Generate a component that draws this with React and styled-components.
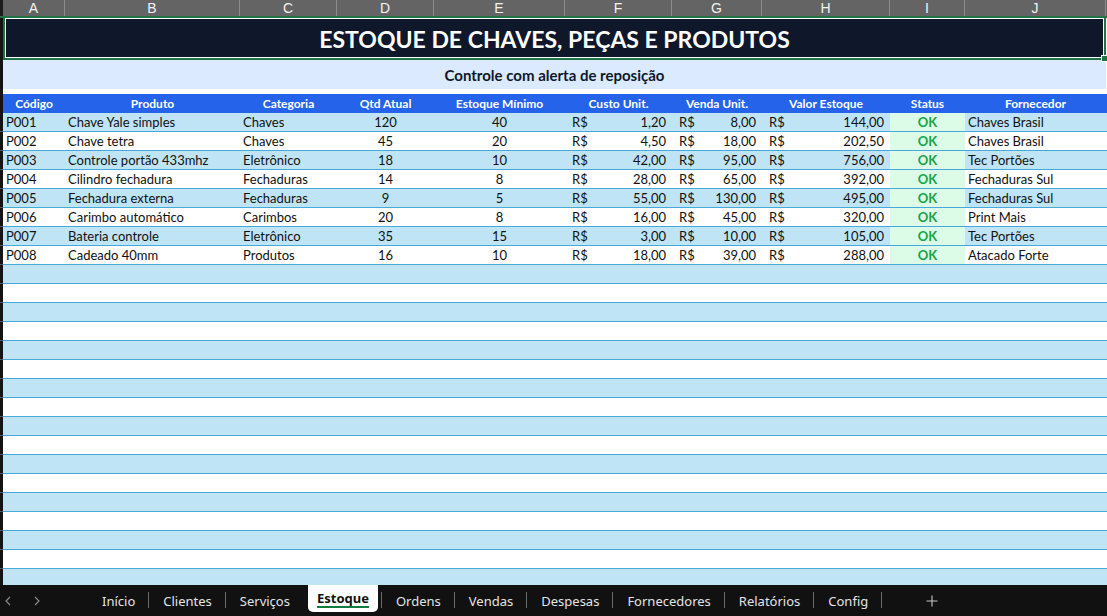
import React from "react";
import styled, { createGlobalStyle } from "styled-components";

const GlobalStyle = createGlobalStyle`
  html, body {
    margin: 0;
    padding: 0;
    background: #ffffff;
    overflow: hidden;
  }
`;

const COLS = "3px 62px 175px 97px 97px 131px 107px 90px 128px 75px 141px 1fr";
const CELL_FONT = `Lato, "Liberation Sans", sans-serif`;

const letters = ["A", "B", "C", "D", "E", "F", "G", "H", "I", "J"];

const headers = [
  "Código",
  "Produto",
  "Categoria",
  "Qtd Atual",
  "Estoque Mínimo",
  "Custo Unit.",
  "Venda Unit.",
  "Valor Estoque",
  "Status",
  "Fornecedor",
];

const items = [
  ["P001", "Chave Yale simples", "Chaves", 120, 40, "1,20", "8,00", "144,00", "Chaves Brasil"],
  ["P002", "Chave tetra", "Chaves", 45, 20, "4,50", "18,00", "202,50", "Chaves Brasil"],
  ["P003", "Controle portão 433mhz", "Eletrônico", 18, 10, "42,00", "95,00", "756,00", "Tec Portões"],
  ["P004", "Cilindro fechadura", "Fechaduras", 14, 8, "28,00", "65,00", "392,00", "Fechaduras Sul"],
  ["P005", "Fechadura externa", "Fechaduras", 9, 5, "55,00", "130,00", "495,00", "Fechaduras Sul"],
  ["P006", "Carimbo automático", "Carimbos", 20, 8, "16,00", "45,00", "320,00", "Print Mais"],
  ["P007", "Bateria controle", "Eletrônico", 35, 15, "3,00", "10,00", "105,00", "Tec Portões"],
  ["P008", "Cadeado 40mm", "Produtos", 16, 10, "18,00", "39,00", "288,00", "Atacado Forte"],
];

const tabs = [
  "Início",
  "Clientes",
  "Serviços",
  "Estoque",
  "Ordens",
  "Vendas",
  "Despesas",
  "Fornecedores",
  "Relatórios",
  "Config",
];

const Sheet = styled.div`
  width: 1107px;
  height: 616px;
  display: flex;
  flex-direction: column;
  background: #ffffff;
  overflow: hidden;
`;

const Grid = styled.div`
  flex: 1;
  display: flex;
  flex-direction: column;
  overflow: hidden;
`;

const ColumnBar = styled.div`
  display: grid;
  grid-template-columns: ${COLS};
  height: 16px;
  background: #646464;
  border-bottom: 2px solid #217346;
  flex-shrink: 0;
`;

const ColumnLetter = styled.div`
  display: flex;
  align-items: center;
  justify-content: center;
  color: #f2f2f2;
  font-family: "Liberation Sans", Arial, sans-serif;
  font-size: 14px;
  border-right: 1px solid #8c8c8c;
  &:first-child {
    background: #1c1c1c;
    border-right: none;
  }
`;

const Row = styled.div`
  display: grid;
  grid-template-columns: ${COLS};
  height: ${(p) => p.$h}px;
  flex-shrink: 0;
  background: ${(p) => p.$bg || "#ffffff"};
  border-bottom: ${(p) => (p.$line ? `1px solid ${p.$line}` : "none")};
  box-sizing: border-box;
`;

const Gutter = styled.div`
  background: #141414;
  border-bottom: 1px solid #5a5a5a;
  margin-bottom: -1px;
`;

const TitleCell = styled.div`
  grid-column: 2 / 12;
  box-sizing: border-box;
  border: 2px solid #217346;
  border-top: none;
  padding: 1px;
  background: #ffffff;
  position: relative;
`;

const TitleInner = styled.div`
  height: 100%;
  background: #0f172a;
  display: flex;
  align-items: center;
  justify-content: center;
  color: #ffffff;
  font-family: ${CELL_FONT};
  font-weight: 700;
  font-size: 23px;
  padding-top: 1px;
  box-sizing: border-box;
`;

const FillHandle = styled.span`
  position: absolute;
  right: -4px;
  bottom: -4px;
  width: 5px;
  height: 5px;
  background: #217346;
  border: 1px solid #ffffff;
`;

const SubtitleCell = styled.div`
  grid-column: 2 / 12;
  background: #dbeafe;
  display: flex;
  align-items: center;
  justify-content: center;
  color: #0f172a;
  font-family: ${CELL_FONT};
  font-weight: 700;
  font-size: 15px;
`;

const Spacer = styled.div`
  grid-column: 2 / 13;
  background: #ffffff;
`;

const HeadCell = styled.div`
  display: flex;
  align-items: center;
  justify-content: center;
  color: #ffffff;
  font-family: ${CELL_FONT};
  font-weight: 700;
  font-size: 12px;
  white-space: nowrap;
`;

const Cell = styled.div`
  display: flex;
  align-items: center;
  justify-content: ${(p) => p.$align || "flex-start"};
  padding: 0 3px;
  color: #111111;
  font-family: ${CELL_FONT};
  font-size: 13px;
  white-space: nowrap;
  overflow: hidden;
`;

const MoneyCell = styled.div`
  display: flex;
  align-items: center;
  justify-content: space-between;
  padding: 0 6px 0 7px;
  color: #111111;
  font-family: ${CELL_FONT};
  font-size: 13px;
  white-space: nowrap;
`;

const StatusCell = styled.div`
  display: flex;
  align-items: center;
  justify-content: center;
  background: ${(p) => (p.$filled ? "#dcfce7" : "transparent")};
  color: #16a34a;
  font-family: ${CELL_FONT};
  font-weight: 700;
  font-size: 13px;
`;

const TabBar = styled.div`
  height: 31px;
  flex-shrink: 0;
  background: #111111;
  display: flex;
  align-items: stretch;
  font-family: "Noto Sans", "Open Sans", sans-serif;
  font-size: 13px;
  color: #e4e4e4;
`;

const NavArrows = styled.div`
  width: 88px;
  display: flex;
  align-items: center;
  gap: 21px;
  padding-left: 4px;
  box-sizing: border-box;
  color: #8a8a8a;
`;

const Tab = styled.div`
  display: flex;
  align-items: center;
  padding: 0 13px 0 14px;
  white-space: nowrap;
  position: relative;
  ${(p) =>
    p.$active &&
    `
    background: #ffffff;
    color: #111111;
    font-weight: 700;
    padding: 4px 9px 0;
    margin: 0 3px 4px 4px;
    border-radius: 0 0 5px 5px;
    align-items: flex-start;
  `}
`;

const TabUnderline = styled.span`
  position: absolute;
  left: 9px;
  right: 9px;
  bottom: 4px;
  height: 2px;
  background: #107c41;
`;

const Separator = styled.div`
  width: 1px;
  background: ${(p) => (p.$hidden ? "transparent" : "#6b6b6b")};
  margin: 7px 0 8px;
`;

const AddTab = styled.div`
  display: flex;
  align-items: center;
  padding-left: 44px;
  color: #c8c8c8;
`;

const Chevron = ({ dir }) => (
  <svg width="8" height="10" viewBox="0 0 8 10" fill="none">
    <path
      d={dir === "left" ? "M6 1 L2 5 L6 9" : "M2 1 L6 5 L2 9"}
      stroke="currentColor"
      strokeWidth="1.2"
    />
  </svg>
);

const Plus = () => (
  <svg width="12" height="12" viewBox="0 0 12 12">
    <path d="M6 0.5 V11.5 M0.5 6 H11.5" stroke="currentColor" strokeWidth="1.1" />
  </svg>
);

const ROW_LINE = "#45a9dc";
const BLUE_ROW = "#bfe4f5";

const DataRow = ({ item, index }) => {
  const [code, name, cat, qty, min, cost, sale, value, supplier] = item;
  const bg = index % 2 === 0 ? BLUE_ROW : "#ffffff";
  return (
    <Row $h={19} $bg={bg} $line={ROW_LINE}>
      <Gutter />
      <Cell>{code}</Cell>
      <Cell>{name}</Cell>
      <Cell>{cat}</Cell>
      <Cell $align="center">{qty}</Cell>
      <Cell $align="center">{min}</Cell>
      <MoneyCell>
        <span>R$</span>
        <span>{cost}</span>
      </MoneyCell>
      <MoneyCell>
        <span>R$</span>
        <span>{sale}</span>
      </MoneyCell>
      <MoneyCell>
        <span>R$</span>
        <span>{value}</span>
      </MoneyCell>
      <StatusCell $filled>OK</StatusCell>
      <Cell>{supplier}</Cell>
      <div />
    </Row>
  );
};

const EmptyRow = ({ index }) => (
  <Row $h={19} $bg={index % 2 === 0 ? BLUE_ROW : "#ffffff"} $line={ROW_LINE}>
    <Gutter />
  </Row>
);

export default function App() {
  const emptyRows = Array.from({ length: 18 }, (_, i) => items.length + i);
  const activeIndex = tabs.indexOf("Estoque");

  return (
    <>
      <GlobalStyle />
      <Sheet>
        <Grid>
          <ColumnBar>
            <ColumnLetter />
            {letters.map((l) => (
              <ColumnLetter key={l}>{l}</ColumnLetter>
            ))}
          </ColumnBar>

          <Row $h={42}>
            <Gutter />
            <TitleCell>
              <TitleInner>ESTOQUE DE CHAVES, PEÇAS E PRODUTOS</TitleInner>
              <FillHandle />
            </TitleCell>
            <div />
          </Row>

          <Row $h={29}>
            <Gutter />
            <SubtitleCell>Controle com alerta de reposição</SubtitleCell>
            <div />
          </Row>

          <Row $h={5}>
            <Gutter />
            <Spacer />
          </Row>

          <Row $h={19} $bg="#2563eb">
            <Gutter />
            {headers.map((h) => (
              <HeadCell key={h}>{h}</HeadCell>
            ))}
            <div />
          </Row>

          {items.map((item, i) => (
            <DataRow key={item[0]} item={item} index={i} />
          ))}
          {emptyRows.map((i) => (
            <EmptyRow key={i} index={i} />
          ))}
        </Grid>

        <TabBar>
          <NavArrows>
            <Chevron dir="left" />
            <Chevron dir="right" />
          </NavArrows>
          {tabs.map((t, i) => (
            <React.Fragment key={t}>
              <Tab $active={i === activeIndex}>
                {t}
                {i === activeIndex && <TabUnderline />}
              </Tab>
              <Separator $hidden={i === activeIndex - 1} />
            </React.Fragment>
          ))}
          <AddTab>
            <Plus />
          </AddTab>
        </TabBar>
      </Sheet>
    </>
  );
}
